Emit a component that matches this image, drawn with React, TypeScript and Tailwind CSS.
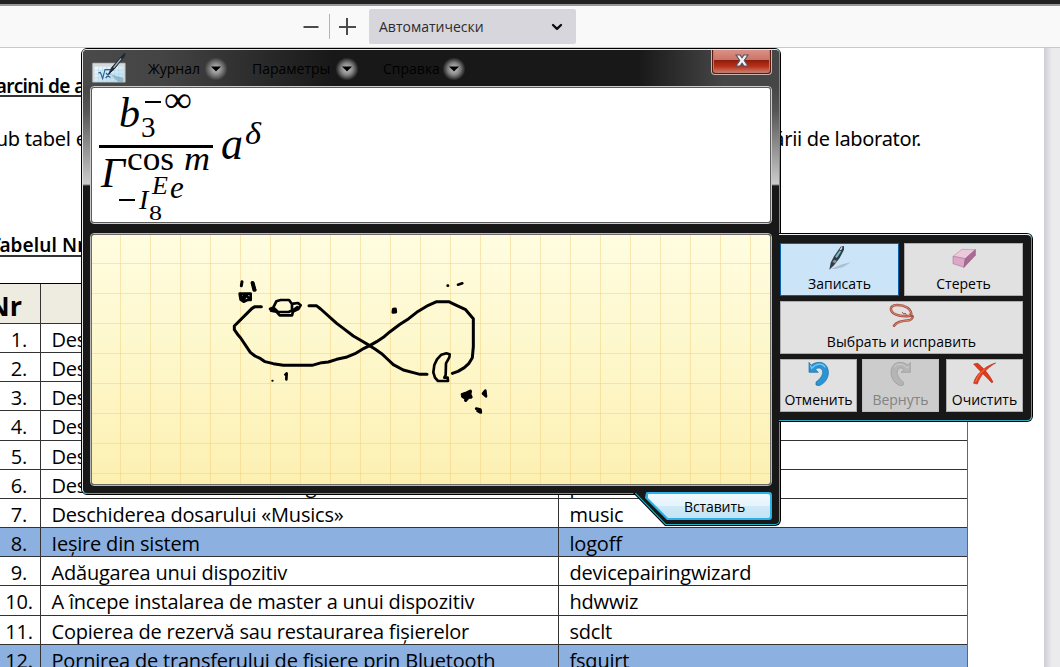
import React from "react";

type Row = { n: number; task: string; cmd: string; marked?: boolean };

const rows: Row[] = [
  { n: 1, task: "Deschiderea", cmd: "" },
  { n: 2, task: "Deschiderea", cmd: "" },
  { n: 3, task: "Deschiderea", cmd: "" },
  { n: 4, task: "Deschiderea", cmd: "" },
  { n: 5, task: "Deschiderea", cmd: "" },
  { n: 6, task: "Deschiderea dosarului «Images»", cmd: "pictures" },
  { n: 7, task: "Deschiderea dosarului «Musics»", cmd: "music" },
  { n: 8, task: "Ieșire din sistem", cmd: "logoff", marked: true },
  { n: 9, task: "Adăugarea unui dispozitiv", cmd: "devicepairingwizard" },
  { n: 10, task: "A începe instalarea de master a unui dispozitiv", cmd: "hdwwiz" },
  { n: 11, task: "Copierea de rezervă sau restaurarea fișierelor", cmd: "sdclt" },
  { n: 12, task: "Pornirea de transferului de fișiere prin Bluetooth", cmd: "fsquirt", marked: true },
];

function ViewerToolbar() {
  return (
    <header className="flex h-[48px] flex-col border-b border-[#c8c8c8] bg-[#f9f9fa]">
      <div className="h-[4px] bg-[#222222]" />
      <div className="h-[2px] bg-[#98989a]" />
      <div className="flex h-[42px] items-center pl-[303px]">
        <svg width="16" height="18" viewBox="0 0 16 18"><path d="M0.5 10H15.5" stroke="#4b4b4d" strokeWidth="2" /></svg>
        <div className="ml-[10px] h-[25px] w-px bg-[#b4b4b6]" />
        <svg className="ml-[9px]" width="17" height="18" viewBox="0 0 17 18"><path d="M0 10H17M8 1V18" stroke="#4b4b4d" strokeWidth="2" /></svg>
        <div className="ml-[13px] flex h-[35px] w-[207px] items-center justify-between rounded-[2px] bg-[#d7d6dc] pl-[10px] pr-[13px]">
          <span className="text-[14px] text-[#2c2c30]">Автоматически</span>
          <svg className="mt-[2px]" width="12" height="8" viewBox="0 0 12 8"><path d="M2 2L6 5.800L10 2" fill="none" stroke="#0c0c0d" strokeWidth="2.3" strokeLinecap="round" strokeLinejoin="round" /></svg>
        </div>
      </div>
    </header>
  );
}

function DocumentPage() {
  return (
    <main className="flex h-[619px]">
      <div className="flex w-[1044px] shrink-0 flex-col overflow-hidden bg-white">
        <div className="mt-[25px] flex h-[24px] w-[300px]">
          <span className="-ml-[14px] h-[24px] whitespace-nowrap border-b-2 border-[#333333] font-['Noto_Sans'] text-[19px] font-semibold leading-[26px] tracking-[-0.6px]">Sarcini de autoevaluare</span>
        </div>
        <div className="mt-[30px] flex h-[24px] w-[921px] justify-between whitespace-nowrap font-['Noto_Sans'] text-[20px] leading-[24px] tracking-[-0.32px]">
          <span className="-ml-[15px] tracking-[-0.25px]">Sub tabel este</span>
          <span>lucrării de laborator.</span>
        </div>
        <div className="mt-[81px] flex h-[25px] w-[300px]">
          <span className="-ml-[10px] h-[25px] whitespace-nowrap border-b-2 border-[#333333] font-['Noto_Sans'] text-[19px] font-semibold leading-[27px] tracking-[0.1px]">Tabelul Nr. 1</span>
        </div>
        <div className="mt-[26px] w-[968px] border-r border-[#666666]">
          <div className="flex h-[40px] border-t border-black bg-[#eeece1] text-[27px] font-bold leading-[43px]">
            <div className="flex w-[41px] justify-end border-r border-[#333333] pr-[18px]">Nr</div>
            <div className="w-[518px] border-r border-[#333333]" />
          </div>
          {rows.map((r) => (
            <div
              key={r.n}
              className={`flex h-[29.17px] border-t border-[#333333] text-[20px] leading-[32px] tracking-[-0.2px] whitespace-nowrap text-black ${r.marked ? "bg-[#8cb0e0]" : "bg-white"}`}
            >
              <div className="w-[41px] border-r border-[#333333] pr-[2px] text-center">{r.n}.</div>
              <div className="w-[518px] border-r border-[#333333] pl-[10.500px]">{r.task}</div>
              <div className="pl-[10.500px]">{r.cmd}</div>
            </div>
          ))}
        </div>
      </div>
      <div className="flex-1 bg-gradient-to-r from-[#cfcfd3] to-[#ebebee] to-50%" />
    </main>
  );
}

function MenuEntry({ label, className }: { label: string; className: string }) {
  return (
    <div className={`flex items-center justify-between ${className}`}>
      <span className="text-[14px] leading-[20px] text-black">{label}</span>
      <span className="flex size-[22px] items-center justify-center bg-[radial-gradient(circle,#b8b8b8_10%,#808080_40%,transparent_74%)]">
        <svg width="10" height="6" viewBox="0 0 10 6"><path d="M0 0.5H10L5 5.5Z" fill="#000" /></svg>
      </span>
    </div>
  );
}

function AppIcon() {
  return (
    <svg width="36" height="32" viewBox="273 156 108 96">
      <defs>
        <linearGradient id="sheet" x1="0" y1="0" x2="1" y2="1">
          <stop offset="0" stopColor="#f4fbfd" /><stop offset="1" stopColor="#b4dcec" />
        </linearGradient>
      </defs>
      <rect x="277" y="189" width="99" height="58" rx="2" fill="#d5d9db" stroke="#8f989c" strokeWidth="2" />
      <rect x="284" y="200" width="86" height="44" fill="url(#sheet)" />
      <path d="M284 211H370M284 222H370M284 233H370M296 200V244M308 200V244M320 200V244M332 200V244M344 200V244M356 200V244" stroke="#a4d2e6" strokeWidth="1.5" />
      <path d="M330 222L370 234V246H355Z" fill="#587f98" opacity=".4" />
      <path d="M295 219L301 217L308 236L315 209H332M318 219L331 233M331 218L317 234" fill="none" stroke="#315f95" strokeWidth="3.5" />
      <path d="M326 222L335 203L369 164L375 160L374 168L342 208Z" fill="#202a33" stroke="#202a33" strokeWidth="3" />
      <path d="M341 203L363 176" stroke="#a9bcc5" strokeWidth="4" />
    </svg>
  );
}

function CloseButton() {
  return (
    <button className="flex h-[26px] w-[61px] items-start justify-center rounded-b-[4px] border border-t-0 border-[#c9b6b2] bg-[#5a1c12] p-px pt-0">
      <span className="flex h-full w-full items-start justify-center rounded-b-[3px] border border-t-0 border-[#bf7a6c] bg-[linear-gradient(to_bottom,#dc9488_0%,#cb7466_48%,#8e1f0d_50%,#b83016_75%,#c7766a_100%)] pt-[5px]">
        <svg width="14" height="13" viewBox="0 0 14 13">
          <path d="M1 1H5L7 3.8L9 1H13L9.3 6.5L13 12H9L7 9.2L5 12H1L4.7 6.5Z" fill="#f3f3f3" stroke="#555266" strokeWidth="1.2" />
        </svg>
      </span>
    </button>
  );
}

function Formula() {
  return (
    <svg width="678" height="134" viewBox="92 88 678 134" fontFamily="'Liberation Serif', serif" fill="#000">
      <text x="119" y="127" fontSize="42" fontStyle="italic">b</text>
      <text x="141" y="137" fontSize="29">3</text>
      <path d="M145 102H161" stroke="#000" strokeWidth="2" />
      <text x="164" y="112" fontSize="37" textLength="28" lengthAdjust="spacingAndGlyphs">∞</text>
      <path d="M99 146.5H213" stroke="#000" strokeWidth="3" />
      <text x="101" y="187" fontSize="42" fontStyle="italic">Γ</text>
      <text x="127" y="170" fontSize="33" textLength="47" lengthAdjust="spacingAndGlyphs">cos</text>
      <text x="184" y="170" fontSize="33" fontStyle="italic" textLength="26" lengthAdjust="spacingAndGlyphs">m</text>
      <path d="M119 200H135" stroke="#000" strokeWidth="2" />
      <text x="139" y="209" fontSize="28" fontStyle="italic">I</text>
      <text x="152" y="193.500" fontSize="26" fontStyle="italic">E</text>
      <text x="170" y="197.500" fontSize="31" fontStyle="italic">e</text>
      <text x="149" y="219.500" fontSize="22" textLength="13" lengthAdjust="spacingAndGlyphs">8</text>
      <text x="221" y="159" fontSize="47" fontStyle="italic" textLength="22" lengthAdjust="spacingAndGlyphs">a</text>
      <text x="245" y="144" fontSize="31" fontStyle="italic" textLength="16" lengthAdjust="spacingAndGlyphs">δ</text>
    </svg>
  );
}

function Ink() {
  return (
    <svg width="678" height="249" viewBox="92 235 678 249">
      <g stroke="#f3cf80" strokeOpacity=".5" strokeWidth="1">
        {Array.from({ length: 22 }, (_, i) => <path key={i} d={`M${120.5 + i * 30} 235V484`} />)}
        {Array.from({ length: 8 }, (_, i) => <path key={i} d={`M92 ${263.5 + i * 30}H770`} />)}
      </g>
      <g transform="translate(220 265) scale(0.33333)" fill="none" stroke="#000" strokeWidth="9" strokeLinecap="round" strokeLinejoin="round">
        <path d="M124 125H105L96 130L43 183V194L55 211L62 219L91 262L105 273L122 281L135 290L160 296L190 301H276L305 293L325 291L350 283L378 277L405 266L432 250L449 242L470 230L490 217L510 200L540 178L566 161L590 142L625 121L650 110H686L703 118L737 134L760 161V245L757 278L746 296L733 308L714 319L697 325" />
        <path d="M267 122H289L302 132L350 175L371 191L400 213L427 229L449 242L466 253L485 266L502 282L520 299L550 315L580 323L600 328H621" />
        <path d="M150 132L160 127L169 109L182 105H207L216 117V136L206 141H174L163 130L153 137L169 140L179 151H216L219 140L235 132L242 121L234 114L220 116" strokeWidth="8" />
        <path d="M218 136L232 126" strokeWidth="7" />
        <path d="M688 277L689 268L679 265L664 269L651 283L643 300L640 322L645 338L654 348H684L683 338H673L677 330L678 295L688 277" strokeWidth="8" />
        <path d="M66 50L64 62M97 54L105 75" strokeWidth="9" />
        <path d="M98 54L103 74" strokeWidth="12" />
        <path d="M59 86H92V105H82L71 110L62 104ZM65 94L72 102L80 91L88 102M76 86L70 97" strokeWidth="8" />
        <path d="M520 133L526 132L527 141L519 142Z" />
        <path d="M683 62H684M714 59L727 55" strokeWidth="8" />
        <path d="M157 347H158" strokeWidth="6" />
        <path d="M196 329L200 325L199 343" strokeWidth="8" />
        <path d="M727 389L740 384L751 379L749 388L753 396L740 397L737 406M728 394L741 402L747 381M735 390L745 392" strokeWidth="10" />
        <path d="M789 386L796 377L798 394L791 388" strokeWidth="8" />
        <path d="M769 431L781 434L782 442L773 437" strokeWidth="9" />
      </g>
    </svg>
  );
}

function PenIcon() {
  return (
    <svg width="26" height="26" viewBox="169 60 78 78">
      <path d="M182 131L215 118L241 112L216 127L194 132Z" fill="#93a9ba" opacity=".6" />
      <path d="M176 134L180 113L190 94L210 65L220 63V74L207 99L190 121Z" fill="#303d45" />
      <path d="M196 97L209 78" stroke="#6fbfd0" strokeWidth="6" />
      <path d="M185 111L190 104L199 107L193 115Z" fill="#8a9298" />
      <path d="M209 75L214 67" stroke="#e0eef1" strokeWidth="4" />
    </svg>
  );
}

function EraserIcon() {
  return (
    <svg width="26" height="26" viewBox="541 60 78 78">
      <path d="M547 94L574 73L614 74L584 101Z" fill="#ecc8dd" stroke="#c391b1" strokeWidth="2" strokeLinejoin="round" />
      <path d="M547 94L584 101L580 127L547 116Z" fill="#dba8c7" stroke="#b27b9e" strokeWidth="2" strokeLinejoin="round" />
      <path d="M584 101L614 74V91L580 127Z" fill="#a96a94" stroke="#925a80" strokeWidth="2" strokeLinejoin="round" />
    </svg>
  );
}

function LassoIcon() {
  return (
    <svg width="26" height="26" viewBox="355 234 78 78" fill="none" strokeLinecap="round">
      <path d="M422 268C421 251 403 240 380 240C364 240 358 248 362 257C368 271 398 276 419 272C430 271 428 281 415 286C398 287 377 292 370 302" stroke="#a54f41" strokeWidth="7.500" />
      <path d="M422 268C421 251 403 240 380 240C364 240 358 248 362 257C368 271 398 276 419 272C430 271 428 281 415 286C398 287 377 292 370 302" stroke="#e08b76" strokeWidth="3" />
      <path d="M395 262L400 268L403 264L408 271M416 267L427 276" stroke="#9a4b3e" strokeWidth="3" />
    </svg>
  );
}

function UndoIcon() {
  return (
    <svg width="26" height="26" viewBox="106 408 78 78">
      <path d="M115 412L121 421C134 410 158 407 168 424C182 447 166 476 145 482L136 480V471C155 458 163 437 149 430C143 427 138 430 135 434L143 442H115Z" fill="#2b94d5" stroke="#176ca8" strokeWidth="2" />
      <path d="M119 421L123 430C138 414 155 414 164 427" stroke="#75c9ef" strokeWidth="4" fill="none" />
    </svg>
  );
}

function RedoIcon() {
  return (
    <svg width="26" height="26" viewBox="352 408 78 78">
      <path d="M419 412L413 421C400 410 376 407 366 424C352 447 369 476 389 482L398 480V471C380 458 373 437 386 430C392 427 397 430 400 434L391 442H419Z" fill="#b5b5b5" stroke="#989898" strokeWidth="2" />
      <path d="M414 423L410 430C396 414 378 414 370 427" stroke="#cdcdcd" strokeWidth="3" fill="none" />
    </svg>
  );
}

function ClearIcon() {
  return (
    <svg width="26" height="26" viewBox="604 408 78 78">
      <path d="M609 417L621 415C637 428 656 448 667 471L663 473C648 456 628 439 609 417Z" fill="#e13a1c" stroke="#b52b15" strokeWidth="2" />
      <path d="M675 414C650 428 630 449 620 477L609 475C613 449 645 422 675 414Z" fill="#e33d20" stroke="#bd321b" strokeWidth="2" />
      <path d="M615 470C621 453 632 440 643 431" stroke="#f4785a" strokeWidth="3" fill="none" />
    </svg>
  );
}

function ToolButton({ label, icon, className }: { label: string; icon: React.ReactNode; className: string }) {
  return (
    <button className={`flex h-[53px] flex-col items-center whitespace-nowrap border pt-px text-[14px] ${className}`}>
      {icon}
      <span className="mt-[3px] leading-[20px]">{label}</span>
    </button>
  );
}

const plain = "border-[#adadad] bg-[#e1e1e1] text-black";

function ToolPanel() {
  return (
    <aside className="z-10 -ml-[2px] mt-[185px] h-[189px] w-[254px] rounded-r-[6px] border border-l-0 border-black">
      <div className="flex h-full flex-col gap-[5px] rounded-r-[5px] border border-l-0 border-t-[#e8f2f4] border-r-[#2fa9ba] border-b-[#2fa9ba] bg-[#181818] pl-px pt-[8px]">
        <div className="flex gap-[5px]">
          <ToolButton label="Записать" icon={<PenIcon />} className="w-[119px] border-[#0a5fad] bg-[#cce4f7] text-black" />
          <ToolButton label="Стереть" icon={<EraserIcon />} className={`w-[119px] ${plain}`} />
        </div>
        <ToolButton label="Выбрать и исправить" icon={<LassoIcon />} className={`w-[243px] tracking-[0.08px] ${plain}`} />
        <div className="flex">
          <ToolButton label="Отменить" icon={<UndoIcon />} className={`w-[77px] ${plain}`} />
          <ToolButton label="Вернуть" icon={<RedoIcon />} className="ml-[5px] w-[77px] border-[#bfbfbf] bg-[#cccccc] text-[#838383]" />
          <ToolButton label="Очистить" icon={<ClearIcon />} className={`ml-[7px] w-[77px] ${plain}`} />
        </div>
      </div>
    </aside>
  );
}

function InsertTab() {
  return (
    <div className="z-10 -mt-[3px] h-[34px] w-[148px] self-end rounded-br-[6px] bg-black pr-px pb-px [clip-path:polygon(0_1px,5px_1px,5px_0,100%_0,100%_100%,32px_100%)]">
      <div className="ml-[1.500px] h-[33px] rounded-br-[5px] bg-[#25b3cc] pr-px pb-px [clip-path:polygon(0_0,100%_0,100%_100%,31px_100%,0_1px)]">
        <div className="ml-[1.500px] flex h-[32px] justify-end rounded-br-[4px] bg-[#181818] pr-[7px] [clip-path:polygon(0_0,100%_0,100%_100%,30px_100%,0_1px)]">
          <button className="h-[28px] w-[127px] rounded-[3px] bg-[#2bb1e8] p-[2px] [clip-path:polygon(1px_0,100%_0,100%_100%,22px_100%,0_6px)]">
            <span className="flex h-full items-center justify-center rounded-[2px] bg-[linear-gradient(to_bottom,#f0f9fe,#e4f3fc_48%,#cfe9f7_52%,#c4e4f5)] pl-[12px] text-[14px] tracking-[-0.1px] text-black [clip-path:polygon(1px_0,100%_0,100%_100%,21px_100%,1px_4px)]">Вставить</span>
          </button>
        </div>
      </div>
    </div>
  );
}

function MathInputWindow() {
  return (
    <div className="absolute left-[81px] top-[48px] flex items-start">
      <div className="flex w-[700px] flex-col">
        <div className="h-[447px] rounded-t-[6px] rounded-bl-[6px] border border-black">
          <div className="h-full overflow-hidden rounded-t-[5px] rounded-bl-[5px] border border-t-[#e6e6e6] border-l-[#e6e6e6] border-r-[#2fa9ba] border-b-[#25b3cc] bg-[#181818]">
            <div className="flex h-[36px] bg-[linear-gradient(to_right,#4a4a4a_0,#444444_80px,#181818_250px,#181818_555px,#464646_640px)] pl-[8px]">
              <div className="pt-[2px]"><AppIcon /></div>
              <div className="flex flex-1 items-center pl-[21px] pt-[2px]">
                <MenuEntry label="Журнал" className="w-[79px]" />
                <MenuEntry label="Параметры" className="ml-[25px] w-[106px]" />
                <MenuEntry label="Справка" className="ml-[25px] w-[82px]" />
              </div>
              <div className="-mt-px mr-[7px]"><CloseButton /></div>
            </div>
            <div className="bg-[linear-gradient(to_bottom,#464646_0,#555555_25px,#cccccc_98px,#777777_99px,#181818_100px)] px-[7px] pb-[9px]">
              <div className="rounded-[4px] border border-[#cccccc]">
                <div className="rounded-[3px] border border-[#5c5c5c] bg-white"><Formula /></div>
              </div>
            </div>
            <div className="px-[7px]">
              <div className="rounded-[4px] border border-[#b8b8b8]">
                <div className="rounded-[3px] border border-[#6c6c68] bg-gradient-to-b from-[#fffde1] to-[#fcf0b1]"><Ink /></div>
              </div>
            </div>
          </div>
        </div>
        <InsertTab />
      </div>
      <ToolPanel />
    </div>
  );
}

export default function App() {
  return (
    <div className="relative h-[667px] w-[1060px] overflow-hidden bg-white font-['Open_Sans','Noto_Sans',sans-serif] text-black [&_svg]:block">
      <ViewerToolbar />
      <DocumentPage />
      <MathInputWindow />
    </div>
  );
}
